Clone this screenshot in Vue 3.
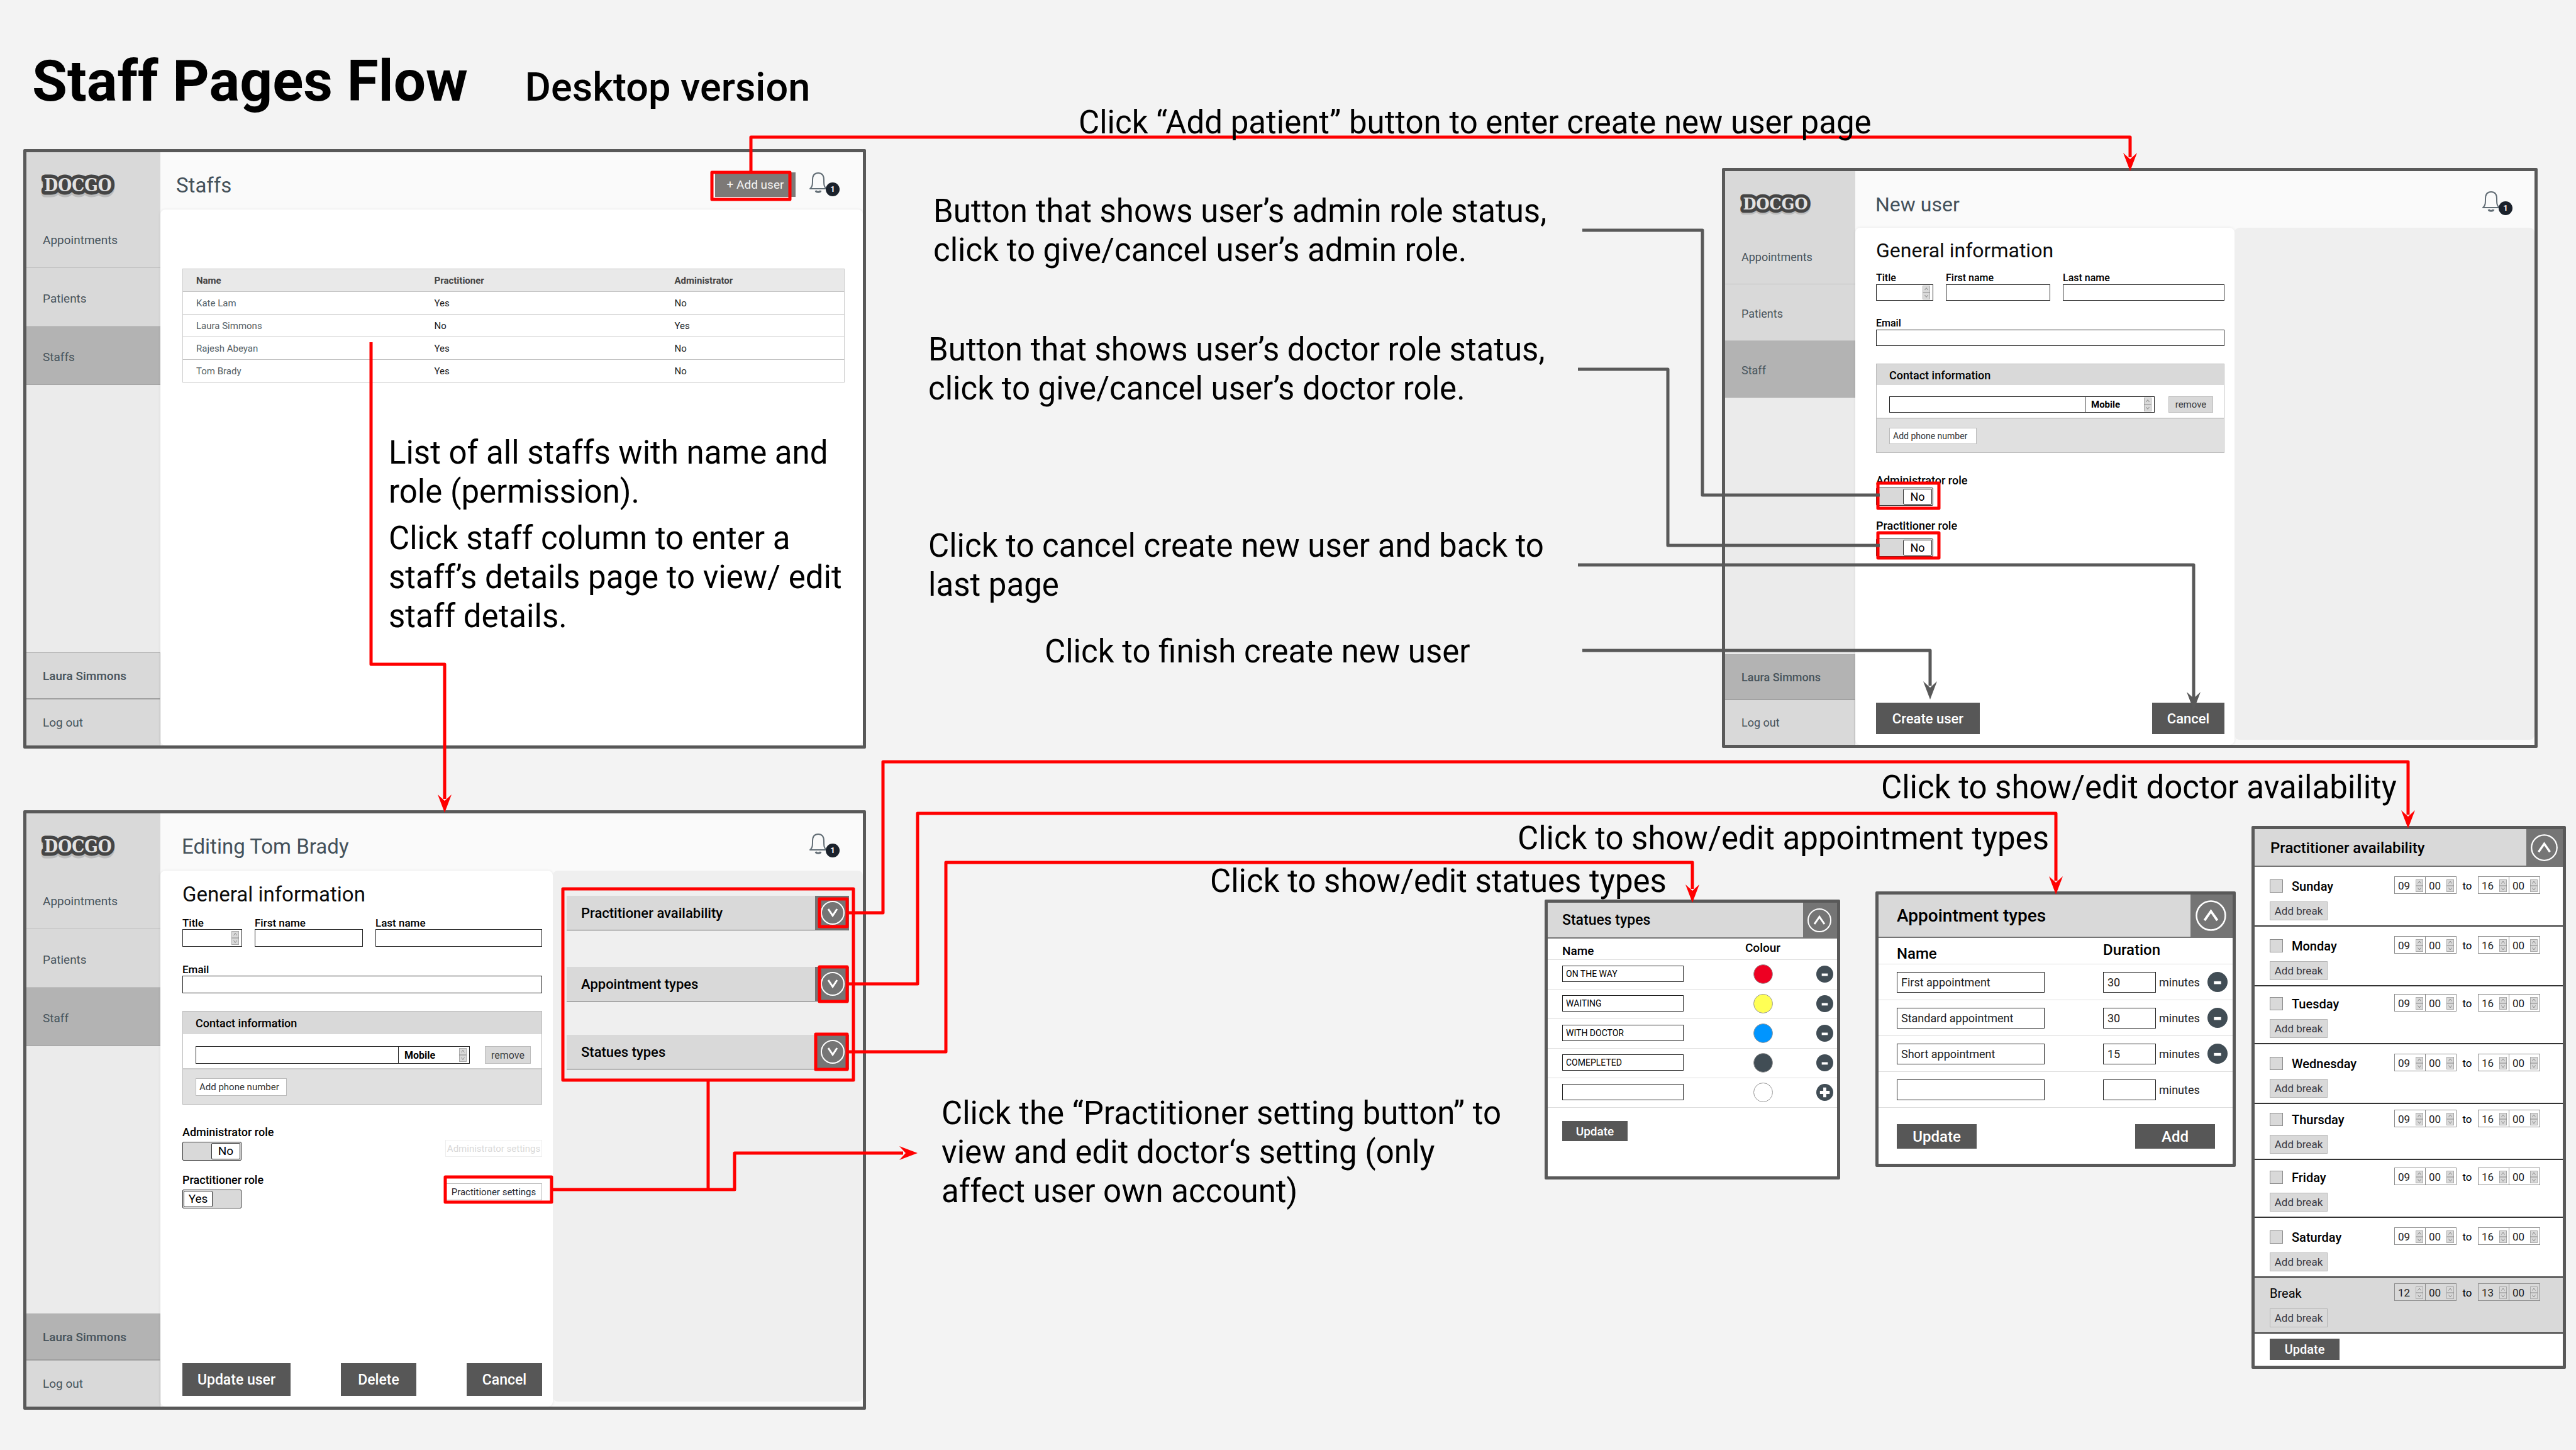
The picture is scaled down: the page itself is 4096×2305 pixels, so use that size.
<script setup>
const screens = [
  {
    id: 'list', kind: 'list', title: 'Staffs', navLabel: 'Staffs', addUser: true,
    userActive: false, x: 37, y: 237,
  },
  {
    id: 'new', kind: 'form', compact: true, title: 'New user', navLabel: 'Staff',
    userActive: true, x: 2738, y: 267,
    roles: [
      { name: 'Administrator role', on: false, tight: true },
      { name: 'Practitioner role', on: false },
    ],
    actions: ['Create user', 'Cancel'],
  },
  {
    id: 'edit', kind: 'form', title: 'Editing Tom Brady', navLabel: 'Staff',
    userActive: true, x: 37, y: 1288,
    roles: [
      { name: 'Administrator role', on: false },
      { name: 'Practitioner role', on: true },
    ],
    settings: true,
    sections: ['Practitioner availability', 'Appointment types', 'Statues types'],
    actions: ['Update user', 'Delete', 'Cancel'],
  },
]

const staff = [
  ['Kate Lam', 'Yes', 'No'],
  ['Laura Simmons', 'No', 'Yes'],
  ['Rajesh Abeyan', 'Yes', 'No'],
  ['Tom Brady', 'Yes', 'No'],
]

const statuses = [
  { name: 'ON THE WAY', tone: 'red' },
  { name: 'WAITING', tone: 'yellow' },
  { name: 'WITH DOCTOR', tone: 'blue' },
  { name: 'COMEPLETED', tone: 'slate' },
  { name: '', tone: 'blank' },
]

const appointments = [
  { name: 'First appointment', minutes: '30' },
  { name: 'Standard appointment', minutes: '30' },
  { name: 'Short appointment', minutes: '15' },
  { name: '', minutes: '' },
]

const days = [
  { name: 'Sunday', space: 'roomy' },
  { name: 'Monday', space: 'roomy' },
  { name: 'Tuesday', space: 'medium' },
  { name: 'Wednesday', space: 'roomy' },
  { name: 'Thursday', space: 'tight' },
  { name: 'Friday', space: 'medium' },
  { name: 'Saturday', space: 'roomy' },
  { name: 'Break', space: 'tight', rest: true },
]

const hours = (day) => (day.rest ? [['12', '00'], ['13', '00']] : [['09', '00'], ['16', '00']])

const notes = [
  { x: 1715, y: 164, w: 1300, text: ['Click “Add patient” button to enter create new user page'] },
  { x: 1484, y: 305, w: 1010, text: ['Button that shows user’s admin role status, click to give/cancel user’s admin role.'] },
  { x: 1476, y: 525, w: 1010, text: ['Button that shows user’s doctor role status, click to give/cancel user’s doctor role.'] },
  { x: 1476, y: 837, w: 1010, text: ['Click to cancel create new user and back to last page'] },
  { x: 1661, y: 1005, w: 800, text: ['Click to finish create new user'] },
  { x: 618, y: 689, w: 740, text: ['List of all staffs with name and role (permission).', 'Click staff column to enter a staff’s details page to view/ edit staff details.'] },
  { x: 1497, y: 1739, w: 920, text: ['Click the “Practitioner setting button” to view and edit doctor‘s setting (only affect user own account)'] },
  { x: 2991, y: 1221, w: 860, text: ['Click to show/edit doctor availability'] },
  { x: 2413, y: 1302, w: 880, text: ['Click to show/edit appointment types'] },
  { x: 1924, y: 1370, w: 780, text: ['Click to show/edit statues types'] },
]

const redFrames = [
  [1132, 274, 124, 43], [2986, 768, 97, 40], [2986, 847, 97, 40],
  [708, 1871, 169, 40], [895, 1413, 462, 304],
  [1303, 1429, 44, 44], [1303, 1537, 44, 55], [1297, 1644, 50, 56],
]
const redPaths = [
  'M1194 274V218H3387V250',
  'M590 544V1056H707V1270',
  'M1349 1451H1404V1211H3829V1295',
  'M1349 1564H1459V1293H3269V1400',
  'M1349 1672H1504V1371H2691V1413',
  'M1126 1718V1891',
  'M879 1891H1168V1833H1436',
]
const redTips = [
  'translate(3387 272)', 'translate(707 1292)', 'translate(3829 1317)',
  'translate(3269 1422)', 'translate(2691 1435)', 'translate(1459 1833) rotate(-90)',
]
const greyPaths = [
  'M2516 366H2707V787H2989',
  'M2509 587H2652V867H2989',
  'M2509 898H3488V1110',
  'M2516 1034H3069V1090',
]
const greyTips = ['translate(3488 1129)', 'translate(3069 1112)']
</script>

<template>
  <main class="board">
    <header class="board-head">
      <h1>Staff Pages Flow</h1>
      <p>Desktop version</p>
    </header>

    <section
      v-for="s in screens" :key="s.id" class="screen" :class="{ compact: s.compact }"
      :style="{ left: s.x + 'px', top: s.y + 'px' }"
    >
      <nav class="side">
        <div class="brand">
          <svg class="logo" viewBox="0 0 130 48" role="img" aria-label="DOCGO">
            <text class="logo-shadow" x="65" y="38" text-anchor="middle">DOCGO</text>
            <text class="logo-text" x="65" y="34" text-anchor="middle">DOCGO</text>
          </svg>
        </div>
        <a href="#" class="item">Appointments</a>
        <a href="#" class="item">Patients</a>
        <a href="#" class="item active">{{ s.navLabel }}</a>
        <div class="side-fill"></div>
        <a href="#" class="item foot user" :class="{ active: s.userActive }">Laura Simmons</a>
        <a href="#" class="item foot">Log out</a>
      </nav>

      <div class="page">
        <header class="top" :class="{ flush: s.addUser }">
          <h2>{{ s.title }}</h2>
          <button v-if="s.addUser" class="add-user" type="button">+ Add user</button>
          <button class="bell" type="button" aria-label="Notifications">
            <svg viewBox="0 0 30 34">
              <path d="M2 27C6 24 6 20 6 13C6 6 9 2 15 2C21 2 24 6 24 13C24 20 24 24 28 27Z" />
              <path class="clapper" d="M11 30C12 33 18 33 19 30" />
            </svg>
            <span class="badge">1</span>
          </button>
        </header>

        <div class="body">
          <div v-if="s.kind === 'list'" class="panel list">
            <table class="staff">
              <thead>
                <tr><th>Name</th><th>Practitioner</th><th>Administrator</th></tr>
              </thead>
              <tbody>
                <tr v-for="row in staff" :key="row[0]">
                  <td v-for="(cell, i) in row" :key="i">{{ cell }}</td>
                </tr>
              </tbody>
            </table>
          </div>

          <template v-else>
            <form class="panel form" @submit.prevent>
              <h3>General information</h3>
              <div class="names">
                <div class="field short">
                  <label :for="s.id + '-title'">Title</label>
                  <span class="stepper box">
                    <select :id="s.id + '-title'"><option></option></select>
                    <svg viewBox="0 0 12 22"><rect x="0.5" y="0.5" width="11" height="21" /><path d="M0 11H12M3.500 7L6 3.500L8.500 7M3.500 15L6 18.500L8.500 15" /></svg>
                  </span>
                </div>
                <div class="field first">
                  <label :for="s.id + '-first'">First name</label>
                  <input :id="s.id + '-first'" class="box" type="text">
                </div>
                <div class="field last">
                  <label :for="s.id + '-last'">Last name</label>
                  <input :id="s.id + '-last'" class="box" type="text">
                </div>
              </div>
              <div class="field email">
                <label :for="s.id + '-email'">Email</label>
                <input :id="s.id + '-email'" class="box" type="email">
              </div>

              <section class="contact">
                <h4>Contact information</h4>
                <div class="phone-row">
                  <input class="box phone" type="tel" aria-label="Phone number">
                  <span class="stepper box kind">
                    <select aria-label="Phone type"><option>Mobile</option></select>
                    <svg viewBox="0 0 12 22"><rect x="0.5" y="0.5" width="11" height="21" /><path d="M0 11H12M3.500 7L6 3.500L8.500 7M3.500 15L6 18.500L8.500 15" /></svg>
                  </span>
                  <button class="remove" type="button">remove</button>
                </div>
                <div class="phone-foot">
                  <button class="add-phone" type="button">Add phone number</button>
                </div>
              </section>

              <div class="roles">
                <div class="role-list">
                  <div v-for="(r, i) in s.roles" :key="r.name" class="role" :class="{ tight: r.tight }">
                    <span :id="s.id + '-role-' + i" class="role-name">{{ r.name }}</span>
                    <button
                      class="switch" :class="{ on: r.on }" type="button" role="switch"
                      :aria-checked="r.on" :aria-labelledby="s.id + '-role-' + i"
                    >
                      <span class="knob">{{ r.on ? 'Yes' : 'No' }}</span>
                    </button>
                  </div>
                </div>
                <div v-if="s.settings" class="settings">
                  <button type="button" disabled>Administrator settings</button>
                  <button type="button">Practitioner settings</button>
                </div>
              </div>

              <div class="actions">
                <button v-for="a in s.actions" :key="a" type="button" :class="{ wide: a.endsWith('user') }">{{ a }}</button>
              </div>
            </form>

            <aside class="extra">
              <div v-for="name in s.sections" :key="name" class="fold">
                <h4>{{ name }}</h4>
                <button type="button" :aria-label="'Open ' + name">
                  <svg viewBox="0 0 40 40"><circle cx="20" cy="20" r="18" /><path d="M13 14L20 24.500L27 14" /></svg>
                </button>
              </div>
            </aside>
          </template>
        </div>
      </div>
    </section>

    <section class="card statues">
      <header>
        <h3>Statues types</h3>
        <button type="button" aria-label="Close Statues types">
          <svg viewBox="0 0 40 40"><circle cx="20" cy="20" r="18" /><path d="M12 26L20 14.500L28 26" /></svg>
        </button>
      </header>
      <div class="card-cols"><span>Name</span><span class="col-two">Colour</span></div>
      <div v-for="(t, i) in statuses" :key="i" class="card-row">
        <input class="box" type="text" :value="t.name" :aria-label="'Status name ' + (i + 1)">
        <span class="tone-cell"><button type="button" class="tone" :class="t.tone" :aria-label="'Colour ' + (i + 1)"></button></span>
        <button type="button" class="round" :aria-label="t.name ? 'Remove' : 'Add'">
          <svg viewBox="0 0 28 28"><path v-if="t.name" class="minus" d="M9 15H19" /><path v-else d="M6 14H22M14 6V22" /></svg>
        </button>
      </div>
      <div class="card-foot"><button type="button" class="solid">Update</button></div>
    </section>

    <section class="card types">
      <header>
        <h3>Appointment types</h3>
        <button type="button" aria-label="Close Appointment types">
          <svg viewBox="0 0 40 40"><circle cx="20" cy="20" r="18" /><path d="M12 26L20 14.500L28 26" /></svg>
        </button>
      </header>
      <div class="card-cols"><span>Name</span><span class="col-two">Duration</span></div>
      <div v-for="(t, i) in appointments" :key="i" class="card-row">
        <input class="box" type="text" :value="t.name" :aria-label="'Appointment name ' + (i + 1)">
        <label class="minutes"><input class="box" type="text" :value="t.minutes"> minutes</label>
        <button v-if="t.name" type="button" class="round" aria-label="Remove">
          <svg viewBox="0 0 28 28"><path class="minus" d="M9 15H19" /></svg>
        </button>
      </div>
      <div class="card-foot">
        <button type="button" class="solid">Update</button>
        <button type="button" class="solid">Add</button>
      </div>
    </section>

    <section class="card week">
      <header>
        <h3>Practitioner availability</h3>
        <button type="button" aria-label="Close Practitioner availability">
          <svg viewBox="0 0 40 40"><circle cx="20" cy="20" r="18" /><path d="M12 26L20 14.500L28 26" /></svg>
        </button>
      </header>
      <div v-for="d in days" :key="d.name" class="day" :class="[d.space, { rest: d.rest }]">
        <div class="day-line">
          <span v-if="d.rest" class="day-name">{{ d.name }}</span>
          <label v-else class="day-name"><input type="checkbox">{{ d.name }}</label>
          <div class="span">
            <template v-for="(pair, p) in hours(d)" :key="p">
              <span v-if="p" class="to">to</span>
              <span v-for="(v, n) in pair" :key="n" class="stepper box time">
                <select :aria-label="d.name + (p ? ' end ' : ' start ') + (n ? 'minute' : 'hour')"><option>{{ v }}</option></select>
                <svg viewBox="0 0 12 20"><rect x="0.5" y="0.5" width="11" height="19" /><path d="M0 10H12M3.500 6.500L6 3L8.500 6.500M3.500 13.500L6 17L8.500 13.500" /></svg>
              </span>
            </template>
          </div>
        </div>
        <button type="button" class="add-break">Add break</button>
      </div>
      <div class="card-foot"><button type="button" class="solid">Update</button></div>
    </section>

    <svg class="links" aria-hidden="true">
      <g class="red">
        <rect v-for="(f, i) in redFrames" :key="'f' + i" :x="f[0]" :y="f[1]" :width="f[2]" :height="f[3]" />
        <path v-for="(d, i) in redPaths" :key="'p' + i" :d="d" />
        <path v-for="(t, i) in redTips" :key="'t' + i" class="tip" :transform="t" d="M0 0L-11 -29L0 -19L11 -29Z" />
      </g>
      <g class="grey">
        <path v-for="(d, i) in greyPaths" :key="'p' + i" :d="d" />
        <path v-for="(t, i) in greyTips" :key="'t' + i" class="tip" :transform="t" d="M0 0L-11 -29L0 -19L11 -29Z" />
      </g>
    </svg>

    <div v-for="(n, i) in notes" :key="i" class="note" :style="{ left: n.x + 'px', top: n.y + 'px', width: n.w + 'px' }">
      <p v-for="(t, k) in n.text" :key="k">{{ t }}</p>
    </div>
  </main>
</template>

<style>
body { margin: 0; background: #f3f3f3; }
</style>

<style scoped>
.board, .board * { box-sizing: border-box; }
.board {
  position: relative;
  width: 100%;
  min-height: 100vh;
  overflow: hidden;
  background: #f3f3f3;
  color: #000;
  font-family: Roboto, "Liberation Sans", sans-serif;
}
h1, h2, h3, h4, p { margin: 0; font-weight: 400; }
button, input, select { font: inherit; color: inherit; margin: 0; padding: 0; border: 0; border-radius: 0; background: none; }
select { appearance: none; outline: 0; }
a { color: inherit; text-decoration: none; }

.board-head { display: flex; align-items: baseline; gap: 91px; padding: 75px 0 0 51px; }
.board-head h1 { font-size: 91px; line-height: 108px; font-weight: 700; }
.board-head p { font-size: 63px; line-height: 74px; font-weight: 500; }

/* App screens */
.screen {
  --side: 213px; --top: 91px; --item: 93px; --foot: 74px; --nav: 19px; --title: 33px;
  --label: 17px; --box: 28px; --small: 16px; --tiny: 15px; --action: 52px; --action-text: 23px;
  position: absolute;
  display: flex;
  width: 1340px;
  min-height: 953px;
  border: 5px solid #595959;
  border-radius: 2px;
  background: #fafafa;
}
.screen.compact {
  --side: 207px; --top: 90px; --item: 90px; --foot: 72px; --nav: 18px; --title: 32px;
  --label: 16px; --box: 26px; --small: 15px; --tiny: 14px; --action: 50px; --action-text: 22px;
  width: 1297px;
  min-height: 922px;
}
.side { display: flex; flex-direction: column; width: var(--side); background: #d9d9d9; color: #47535b; font-size: var(--nav); }
.brand { display: flex; height: var(--top); padding: 28px 0 0 17px; }
.logo { width: 130px; height: 48px; }
.compact .logo { width: 126px; height: 46px; }
.logo-text, .logo-shadow { font-family: "DejaVu Serif Condensed", "DejaVu Serif", serif; font-weight: 700; font-size: 28px; stroke-linejoin: round; paint-order: stroke; }
.logo-text { fill: #e2e2e2; stroke: #454545; stroke-width: 11px; }
.logo-shadow { fill: #a9a9a9; stroke: #a9a9a9; stroke-width: 11px; opacity: .6; }
.item { display: flex; align-items: center; height: var(--item); padding: 4px 0 0 26px; border-bottom: 1px solid #bfbfbf; }
.item.active { background: #b3b3b3; border-bottom-color: #a2a2a2; }
.item.foot { height: var(--foot); padding-top: 0; border: 1px solid #adadad; border-width: 1px 1px 0 0; }
.item.user { font-weight: 500; border-bottom: 1px solid #999; }
.side-fill { flex: 1; background: #ebebeb; }

.page { flex: 1; display: flex; flex-direction: column; min-width: 0; }
.top { display: flex; align-items: flex-start; height: var(--top); padding: 0 56px 0 34px; }
.top.flush { padding-left: 25px; }
.compact .top { padding: 0 54px 0 32px; }
.top h2 { flex: 1; padding-top: 34px; font-size: var(--title); line-height: 38px; color: #44515a; }
.add-user { width: 128px; height: 39px; margin: 32px 21px 0 0; background: #7d7977; color: #f5f5f5; font-size: 19px; }
.bell { position: relative; width: 30px; height: 34px; margin-top: 31px; }
.bell svg { display: block; width: 30px; height: 34px; fill: none; stroke: #626d75; stroke-width: 2px; stroke-linejoin: round; }
.bell .clapper { stroke-width: 3px; }
.badge { position: absolute; left: 27px; top: 17px; width: 22px; height: 22px; border-radius: 50%; background: #1a212b; color: #fff; font-size: 13px; line-height: 22px; font-weight: 700; text-align: center; }

.body { flex: 1; display: flex; }
.panel { background: #fff; border-radius: 8px; box-shadow: 0 0 4px rgba(0, 0, 0, .09); }
.list { flex: 1; padding: 94px 29px 0 35px; }
.staff { width: 100%; border-collapse: collapse; table-layout: fixed; font-size: 15px; line-height: 18px; color: #1b1b1b; }
.staff th, .staff td { height: 36px; padding: 0; text-align: left; border-top: 1px solid #c4c4c4; border-bottom: 1px solid #c4c4c4; }
.staff th { background: #e9e9e9; color: #444; font-weight: 700; }
.staff th:first-child, .staff td:first-child { width: 400px; padding-left: 21px; border-left: 1px solid #ccc; }
.staff th:nth-child(2) { width: 382px; }
.staff th:last-child, .staff td:last-child { border-right: 1px solid #ccc; }
.staff td:first-child { color: #545f66; }

.form { display: flex; flex-direction: column; width: 624px; padding: 18px 17px 17px 35px; }
.compact .form { width: 603px; padding: 16px 16px 17px 33px; }
.form h3 { font-size: var(--title); line-height: 40px; color: #0c0c0c; }
.names { display: flex; gap: 20px; margin-top: 15px; }
.compact .names { margin-top: 14px; }
.field { display: flex; flex-direction: column; font-size: var(--label); }
.field label { font-weight: 500; line-height: 20px; }
.short { width: 95px; }
.first { width: 172px; }
.last { flex: 1; }
.compact .short { width: 91px; }
.compact .first { width: 166px; }
.email { margin-top: 26px; }
.box { border: 1px solid #222; background: #fff; height: var(--box); }
.field input { width: 100%; }
.stepper { display: flex; align-items: center; padding-right: 4px; }
.stepper select { flex: 1; min-width: 0; height: 100%; }
.stepper svg { width: 12px; height: 22px; fill: #d9d9d9; stroke: #aaa; stroke-width: 1px; }
.stepper svg path { fill: none; stroke: #888; }

.contact { margin-top: 28px; border: 1px solid #bbb; background: #e0e0e0; }
.contact h4 { height: 36px; padding-left: 20px; background: #d9d9d9; font-size: 18px; line-height: 38px; font-weight: 500; }
.compact .contact h4 { height: 33px; line-height: 36px; }
.phone-row { display: flex; padding: 19px 17px 7px 20px; background: #fff; border-bottom: 2px solid #ccc; }
.compact .phone-row { padding: 18px 17px 8px 20px; }
.phone { flex: 1; min-width: 0; border-right: 0; }
.kind { width: 114px; padding-left: 9px; font-size: var(--small); font-weight: 700; }
.compact .kind { width: 111px; }
.remove { width: 73px; height: var(--box); margin-left: 24px; border: 1px solid #bbb; background: #d9d9d9; color: #3b3b3b; font-size: var(--small); }
.compact .remove { width: 71px; margin-left: 22px; }
.phone-foot { padding: 14px 20px 13px; display: flex; }
.add-phone { width: 145px; height: var(--box); padding-left: 5px; border: 1px solid #bbb; background: #fff; color: #333; font-size: var(--tiny); text-align: left; }
.compact .add-phone { width: 139px; }

.roles { display: flex; justify-content: space-between; margin-top: 34px; }
.role-list { display: flex; flex-direction: column; gap: 21px; }
.compact .role-list { gap: 22px; }
.role { display: flex; flex-direction: column; align-items: flex-start; gap: 5px; }
.compact .role { gap: 10px; }
.compact .role.tight { gap: 1px; }
.role-name { font-size: 18px; line-height: 20px; font-weight: 500; }
.switch { display: flex; justify-content: flex-end; width: 94px; height: 30px; padding: 1px; border: 1px solid #333; border-radius: 2px; background: #d9d9d9; font-size: 19px; }
.switch.on { justify-content: flex-start; }
.compact .switch { width: 91px; height: 29px; font-size: 18px; }
.knob { width: 46px; height: 100%; border: 1px solid #333; border-radius: 2px; background: #fff; line-height: 24px; text-align: center; }
.settings { display: flex; flex-direction: column; gap: 42px; padding-top: 22px; }
.settings button { width: 154px; height: 27px; border: 1px solid #bbb; background: #fff; color: #2b2b33; font-size: 15px; white-space: nowrap; }
.settings button:disabled { border-color: #eee; color: #d9d9d9; }
.actions { display: flex; justify-content: space-between; margin-top: auto; }
.actions button { width: 120px; height: var(--action); background: #575757; color: #fff; font-size: var(--action-text); font-weight: 500; }
.actions .wide { width: 172px; }
.compact .actions button { width: 115px; }
.compact .actions .wide { width: 165px; }

.extra { flex: 1; margin-bottom: 8px; padding: 40px 22px 0; background: #efefef; border-radius: 8px; }
.fold { display: flex; height: 55px; background: #d9d9d9; border-bottom: 1px solid #555; }
.fold + .fold { margin-top: 58px; }
.fold + .fold + .fold { margin-top: 53px; }
.fold h4 { flex: 1; padding-left: 23px; font-size: 22px; line-height: 56px; font-weight: 500; }
.fold button, .card header button { display: flex; align-items: center; justify-content: center; background: #757575; }
.fold button { width: 54px; padding-left: 2px; }
.fold svg, .card header svg { width: 40px; height: 40px; fill: none; stroke: #fff; stroke-width: 2px; }
.fold path, .card header path { stroke-width: 3px; }

/* Settings cards */
.card { position: absolute; border: 5px solid #595959; border-radius: 2px; background: #fff; }
.card header { display: flex; background: #d9d9d9; border-bottom: 2px solid #757575; }
.card header h3 { flex: 1; font-weight: 500; }
.card header button { padding-right: 2px; }
.card-cols { display: flex; align-items: flex-start; border-bottom: 1px solid #ddd; font-weight: 500; }
.card-row { display: flex; align-items: center; border-bottom: 1px solid #ddd; }
.round { display: flex; margin-left: auto; border-radius: 50%; background: #414d55; }
.round svg { width: 100%; height: 100%; fill: none; stroke: #fff; stroke-width: 5px; }
.round .minus { stroke-width: 4px; }
.solid { background: #575757; color: #fff; font-weight: 500; }
.card-foot { display: flex; justify-content: space-between; }

.statues { left: 2456px; top: 1430px; width: 470px; min-height: 445px; }
.statues header { height: 57px; padding-left: 23px; }
.statues header h3 { font-size: 23px; line-height: 56px; }
.statues header button { width: 54px; }
.statues .card-cols { height: 34px; padding-left: 23px; font-size: 19px; line-height: 22px; }
.statues .card-cols span:first-child { width: 193px; padding-top: 9px; }
.statues .col-two { width: 60px; margin-left: 96px; padding-top: 4px; text-align: center; }
.statues .card-row { height: 47px; padding: 0 6px 2px 23px; font-size: 14px; }
.statues .box { width: 193px; height: 26px; padding-left: 5px; }
.tone-cell { display: flex; justify-content: center; width: 60px; margin-left: 96px; }
.tone { width: 31px; height: 31px; border: 1px solid #999; border-radius: 50%; }
.red.tone { background: #ee0022; }
.yellow { background: #ffff55; }
.blue { background: #0095ff; }
.slate { background: #414d55; }
.blank { background: #fff; }
.statues .round { width: 27px; height: 27px; }
.statues .card-foot { padding: 21px 23px 0; }
.statues .solid { width: 104px; height: 32px; font-size: 19px; }

.types { left: 2982px; top: 1417px; width: 573px; min-height: 438px; }
.types header { height: 69px; padding-left: 29px; }
.types header h3 { font-size: 28px; line-height: 68px; }
.types header button { width: 67px; }
.types header svg { width: 51px; height: 51px; }
.types .card-cols { height: 42px; padding-left: 29px; font-size: 24px; line-height: 28px; }
.types .card-cols span:first-child { width: 235px; padding-top: 11px; }
.types .col-two { margin-left: 93px; padding-top: 5px; }
.types .card-row { height: 57px; padding: 0 8px 0 29px; font-size: 18px; color: #222; }
.types .box { width: 235px; height: 33px; padding-left: 6px; }
.minutes { display: flex; align-items: center; gap: 5px; margin-left: 93px; }
.types .minutes .box { width: 84px; }
.types .round { width: 32px; height: 32px; }
.types .card-foot { padding: 26px 28px 24px 29px; }
.types .solid { width: 127px; height: 39px; font-size: 24px; }

.week { left: 3580px; top: 1313px; width: 500px; }
.week header { height: 60px; padding-left: 25px; }
.week header h3 { font-size: 24px; line-height: 60px; }
.week header button { width: 58px; }
.week header svg { width: 45px; height: 45px; }
.day { padding: 15px 36px 8px 24px; border-bottom: 2px solid #333; }
.day.medium { padding-top: 12px; }
.day.tight { padding-top: 9px; }
.day-line { display: flex; justify-content: space-between; height: 28px; }
.day-name { display: flex; align-items: center; gap: 14px; padding-top: 3px; font-size: 20px; line-height: 28px; font-weight: 500; }
.day-name input { appearance: none; width: 21px; height: 21px; border: 1px solid #8c8c8c; background: #d9d9d9; }
.rest { background: #d9d9d9; }
.rest .day-name { font-weight: 400; }
.span { display: flex; font-size: 17px; }
.time { width: 50px; height: 28px; padding: 2px 3px 0 5px; border-color: #8c8c8c; color: #222; }
.time + .time { margin-left: -1px; }
.time svg { height: 20px; }
.rest .time { background: none; }
.rest .time svg { fill: none; }
.to { width: 34px; line-height: 31px; text-align: center; }
.add-break { display: block; width: 92px; height: 30px; margin-top: 12px; border: 1px solid #b5b5b5; background: #d9d9d9; color: #3a3a42; font-size: 17px; }
.week .card-foot { padding: 8px 24px 9px; }
.week .solid { width: 111px; height: 34px; font-size: 20px; }

/* Flow arrows and notes */
.links { position: absolute; left: 0; top: 0; width: 100%; height: 100%; pointer-events: none; fill: none; stroke-width: 5px; }
.links .red { stroke: #f00; stroke-linejoin: round; }
.links .grey { stroke: #595959; stroke-linejoin: round; }
.links .tip { stroke: none; }
.links .red .tip { fill: #f00; }
.links .grey .tip { fill: #595959; }
.note { position: absolute; font-size: 51px; line-height: 62px; }
.note p + p { margin-top: 12px; }
</style>
